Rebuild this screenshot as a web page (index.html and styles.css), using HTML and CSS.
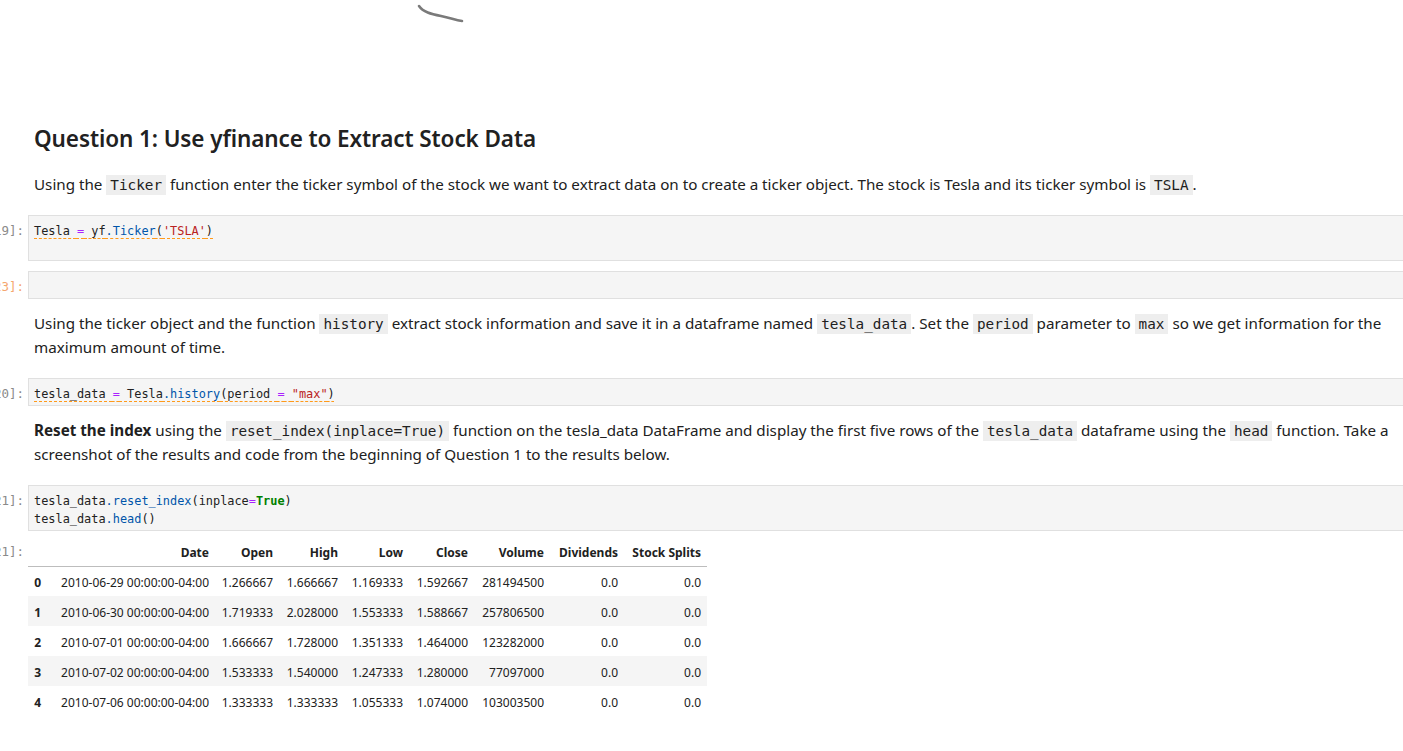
FILE: index.html
```html
<!DOCTYPE html>
<html>
<head>
<meta charset="utf-8">
<link rel="stylesheet" href="styles.css">
</head>
<body>
<svg class="squiggle" width="60" height="30" viewBox="0 0 60 30"><path d="M4 6 C 8 12, 16 14, 26 16 S 40 20, 47 21" fill="none" stroke="#7a7a7a" stroke-width="2.6" stroke-linecap="round"/></svg>
<div class="notebook">
  <div class="cell md">
    <div class="prompt"></div>
    <div class="md-body">
      <h2 class="title">Question 1: Use yfinance to Extract Stock Data</h2>
      <p class="para">Using the <code class="ic">Ticker</code> function enter the ticker symbol of the stock we want to extract data on to create a ticker object. The stock is Tesla and its ticker symbol is <code class="ic">TSLA</code>.</p>
    </div>
  </div>

  <div class="cell code">
    <div class="prompt">In&nbsp;[19]:</div>
    <div class="input"><span class="lint">Tesla <span class="op">=</span> yf<span class="pr">.Ticker</span>(<span class="st">'TSLA'</span>)</span><br>&nbsp;</div>
  </div>

  <div class="cell code">
    <div class="prompt orange">In&nbsp;[23]:</div>
    <div class="input">&nbsp;</div>
  </div>

  <div class="cell md">
    <div class="prompt"></div>
    <div class="md-body">
      <p class="para">Using the ticker object and the function <code class="ic">history</code> extract stock information and save it in a dataframe named <code class="ic">tesla_data</code>. Set the <code class="ic">period</code> parameter to <code class="ic">max</code> so we get information for the maximum amount of time.</p>
    </div>
  </div>

  <div class="cell code">
    <div class="prompt">In&nbsp;[20]:</div>
    <div class="input"><span class="lint">tesla_data <span class="op">=</span> Tesla<span class="pr">.history</span>(period <span class="op">=</span> <span class="st">"max"</span>)</span></div>
  </div>

  <div class="cell md">
    <div class="prompt"></div>
    <div class="md-body">
      <p class="para"><strong>Reset the index</strong> using the <code class="ic">reset_index(inplace=True)</code> function on the tesla_data DataFrame and display the first five rows of the <code class="ic">tesla_data</code> dataframe using the <code class="ic">head</code> function. Take a screenshot of the results and code from the beginning of Question 1 to the results below.</p>
    </div>
  </div>

  <div class="cell code last">
    <div class="prompt">In&nbsp;[21]:</div>
    <div class="input">tesla_data<span class="pr">.reset_index</span>(inplace<span class="op">=</span><span class="kw">True</span>)<br>tesla_data<span class="pr">.head</span>()</div>
  </div>

  <div class="cell output">
    <div class="prompt">Out[21]:</div>
    <div class="out-body">
      <table class="df">
        <colgroup>
          <col class="c-idx"><col class="c-date"><col class="c-open"><col class="c-high"><col class="c-low"><col class="c-close"><col class="c-vol"><col class="c-div"><col class="c-split">
        </colgroup>
        <thead>
          <tr><th></th><th>Date</th><th>Open</th><th>High</th><th>Low</th><th>Close</th><th>Volume</th><th>Dividends</th><th>Stock Splits</th></tr>
        </thead>
        <tbody>
          <tr><th>0</th><td>2010-06-29 00:00:00-04:00</td><td>1.266667</td><td>1.666667</td><td>1.169333</td><td>1.592667</td><td>281494500</td><td>0.0</td><td>0.0</td></tr>
          <tr><th>1</th><td>2010-06-30 00:00:00-04:00</td><td>1.719333</td><td>2.028000</td><td>1.553333</td><td>1.588667</td><td>257806500</td><td>0.0</td><td>0.0</td></tr>
          <tr><th>2</th><td>2010-07-01 00:00:00-04:00</td><td>1.666667</td><td>1.728000</td><td>1.351333</td><td>1.464000</td><td>123282000</td><td>0.0</td><td>0.0</td></tr>
          <tr><th>3</th><td>2010-07-02 00:00:00-04:00</td><td>1.533333</td><td>1.540000</td><td>1.247333</td><td>1.280000</td><td>77097000</td><td>0.0</td><td>0.0</td></tr>
          <tr><th>4</th><td>2010-07-06 00:00:00-04:00</td><td>1.333333</td><td>1.333333</td><td>1.055333</td><td>1.074000</td><td>103003500</td><td>0.0</td><td>0.0</td></tr>
        </tbody>
      </table>
    </div>
  </div>
</div>
</body>
</html>
```

FILE: styles.css
```css
html, body {
  margin: 0;
  padding: 0;
  background: #ffffff;
}
body {
  overflow: hidden;
  font-family: "Noto Sans", "Open Sans", sans-serif;
  color: #212121;
  width: 1403px;
  height: 751px;
  position: relative;
}
.squiggle {
  position: absolute;
  left: 415px;
  top: 0;
}
.notebook {
  padding-top: 116px;
  margin-right: -6px;
}
.cell {
  display: flex;
  padding: 5px 0;
}
.prompt {
  flex: 0 0 24px;
  width: 24px;
  padding-right: 4px;
  display: flex;
  justify-content: flex-end;
  overflow: hidden;
  white-space: nowrap;
  font-family: "DejaVu Sans Mono", monospace;
  font-size: 12.5px;
  line-height: 18px;
  color: #8a8a8a;
  padding-top: 7px;
}
.prompt.orange {
  color: #f5a66e;
}
.md-body {
  flex: 1;
  padding: 2px 0 9px 6px;
}
.title {
  margin: 0 0 17px 0;
  font-size: 22.5px;
  letter-spacing: -0.1px;
  font-weight: 600;
  line-height: 32px;
  color: #212121;
}
.para {
  margin: 0;
  font-size: 15.2px;
  line-height: 24px;
  padding-right: 10px;
}
.para strong {
  font-weight: 700;
}
.ic {
  font-family: "DejaVu Sans Mono", monospace;
  font-size: 14.3px;
  line-height: 1;
  background: #eeeeee;
  padding: 2px 4px;
  color: #212121;
}
.input {
  flex: 1;
  background: #f5f5f5;
  border: 1px solid #e0e0e0;
  padding: 6px 5px 2px 5px;
  font-family: "DejaVu Sans Mono", monospace;
  font-size: 11.9px;
  line-height: 18px;
  color: #212121;
  white-space: pre;
}
.lint {
  text-decoration: underline dashed #ff9a1a;
  text-decoration-skip-ink: none;
  text-underline-offset: 3px;
}
.op { color: #aa22ff; }
.pr { color: #0055aa; }
.st { color: #ba2121; }
.kw { color: #008000; font-weight: 700; }
.output {
  padding-top: 1px;
}
.output .prompt {
  padding-top: 6px;
}
.out-body {
  flex: 1;
}
.df {
  border-collapse: collapse;
  table-layout: fixed;
  font-size: 12px;
  color: #212121;
}
.c-idx { width: 19px; }
.c-date { width: 168px; }
.c-open { width: 64px; }
.c-high { width: 65px; }
.c-low { width: 65px; }
.c-close { width: 65px; }
.c-vol { width: 76px; }
.c-div { width: 74px; }
.c-split { width: 83px; }
.df th, .df td {
  padding: 2px 6px 0 6px;
  text-align: right;
  white-space: nowrap;
  height: 30px;
  box-sizing: border-box;
}
.df thead th {
  font-weight: 700;
  border-bottom: 1px solid #bdbdbd;
  height: 29px;
}
.df tbody th {
  font-weight: 700;
}
.df tbody tr:nth-child(even) {
  background: #f5f5f5;
}
```
